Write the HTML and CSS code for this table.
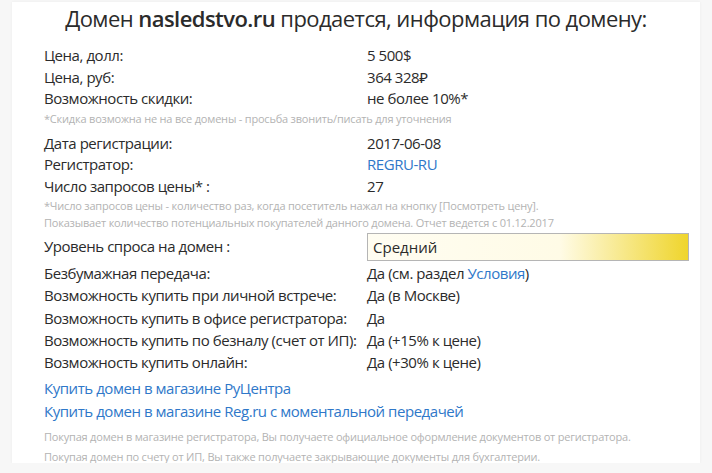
FILE: index.html
```html
<!DOCTYPE html>
<html lang="ru">
<head>
    <meta charset="UTF-8">
    <title>Домен nasledstvo.ru продается</title>
    <link rel="stylesheet" href="styles.css">
</head>
<body>
    <div class="card">
        <h1>Домен <b>nasledstvo.ru</b> продается, информация по домену:</h1>

        <div class="rows">
            <div class="row"><span class="label">Цена, долл:</span><span>5 500$</span></div>
            <div class="row"><span class="label">Цена, руб:</span><span>364 328₽</span></div>
            <div class="row"><span class="label">Возможность скидки:</span><span>не более 10%*</span></div>
        </div>
        <p class="note">*Скидка возможна не на все домены - просьба звонить/писать для уточнения</p>

        <div class="rows group">
            <div class="row"><span class="label">Дата регистрации:</span><span>2017-06-08</span></div>
            <div class="row"><span class="label">Регистратор:</span><a href="#">REGRU-RU</a></div>
            <div class="row"><span class="label">Число запросов цены* :</span><span>27</span></div>
        </div>
        <p class="note">*Число запросов цены - количество раз, когда посетитель нажал на кнопку [Посмотреть цену].<br>
        Показывает количество потенциальных покупателей данного домена. Отчет ведется с 01.12.2017</p>

        <div class="row demand">
            <span class="label">Уровень спроса на домен :</span>
            <span class="level">Средний</span>
        </div>

        <div class="rows options">
            <div class="row"><span class="label">Безбумажная передача:</span><span>Да (см. раздел <a href="#">Условия</a>)</span></div>
            <div class="row"><span class="label">Возможность купить при личной встрече:</span><span>Да (в Москве)</span></div>
            <div class="row"><span class="label">Возможность купить в офисе регистратора:</span><span>Да</span></div>
            <div class="row"><span class="label">Возможность купить по безналу (счет от ИП):</span><span>Да (+15% к цене)</span></div>
            <div class="row"><span class="label">Возможность купить онлайн:</span><span>Да (+30% к цене)</span></div>
        </div>

        <div class="shops">
            <a href="#">Купить домен в магазине РуЦентра</a>
            <a href="#">Купить домен в магазине Reg.ru с моментальной передачей</a>
        </div>

        <p class="note bottom">Покупая домен в магазине регистратора, Вы получаете официальное оформление документов от регистратора.<br>
        Покупая домен по счету от ИП, Вы также получаете закрывающие документы для бухгалтерии.</p>
    </div>
</body>
</html>
```

FILE: styles.css
```css
body {
    margin: 0;
    padding: 2px 12px 0;
    background-color: #f7f7f7;
    font-family: "Open Sans", "Noto Sans", sans-serif;
    color: #2b2b2b;
}
.card {
    background: white;
    height: 461px;
    box-sizing: border-box;
    padding: 0 20px 0 32px;
    box-shadow: 0 0 3px rgba(0,0,0,0.05);
}
h1 {
    margin: 0 0 0 -12px;
    padding-top: 1px;
    font-size: 22px;
    font-weight: normal;
    text-align: center;
    letter-spacing: -0.55px;
    line-height: 31px;
}
h1 b {
    font-weight: 600;
}
.rows {
    margin-top: 11px;
}
.row {
    display: grid;
    grid-template-columns: 323px 1fr;
    font-size: 15px;
    line-height: 21.5px;
    letter-spacing: -0.45px;
}
.group {
    margin-top: 6px;
}
.options .row {
    line-height: 22.3px;
}
.options {
    margin-top: 1px;
}
a {
    color: #2f78c9;
    text-decoration: none;
}
.note {
    margin: 0;
    font-size: 11px;
    line-height: 17px;
    color: #b3b3b3;
    letter-spacing: -0.2px;
}
.demand {
    margin-top: 2px;
    align-items: center;
}
.level {
    height: 28px;
    line-height: 27px;
    box-sizing: border-box;
    width: 322px;
    border: 1px solid #b5b5b5;
    padding-left: 5px;
    font-size: 15px;
    letter-spacing: 0;
    background: linear-gradient(to right, #fffdf2 0%, #fffbe6 60%, #efd52c 100%);
}
.shops {
    margin-top: 4px;
    display: flex;
    flex-direction: column;
    font-size: 15px;
    line-height: 23px;
    letter-spacing: -0.45px;
}
.bottom {
    margin-top: 4px;
    line-height: 20px;
}
```
